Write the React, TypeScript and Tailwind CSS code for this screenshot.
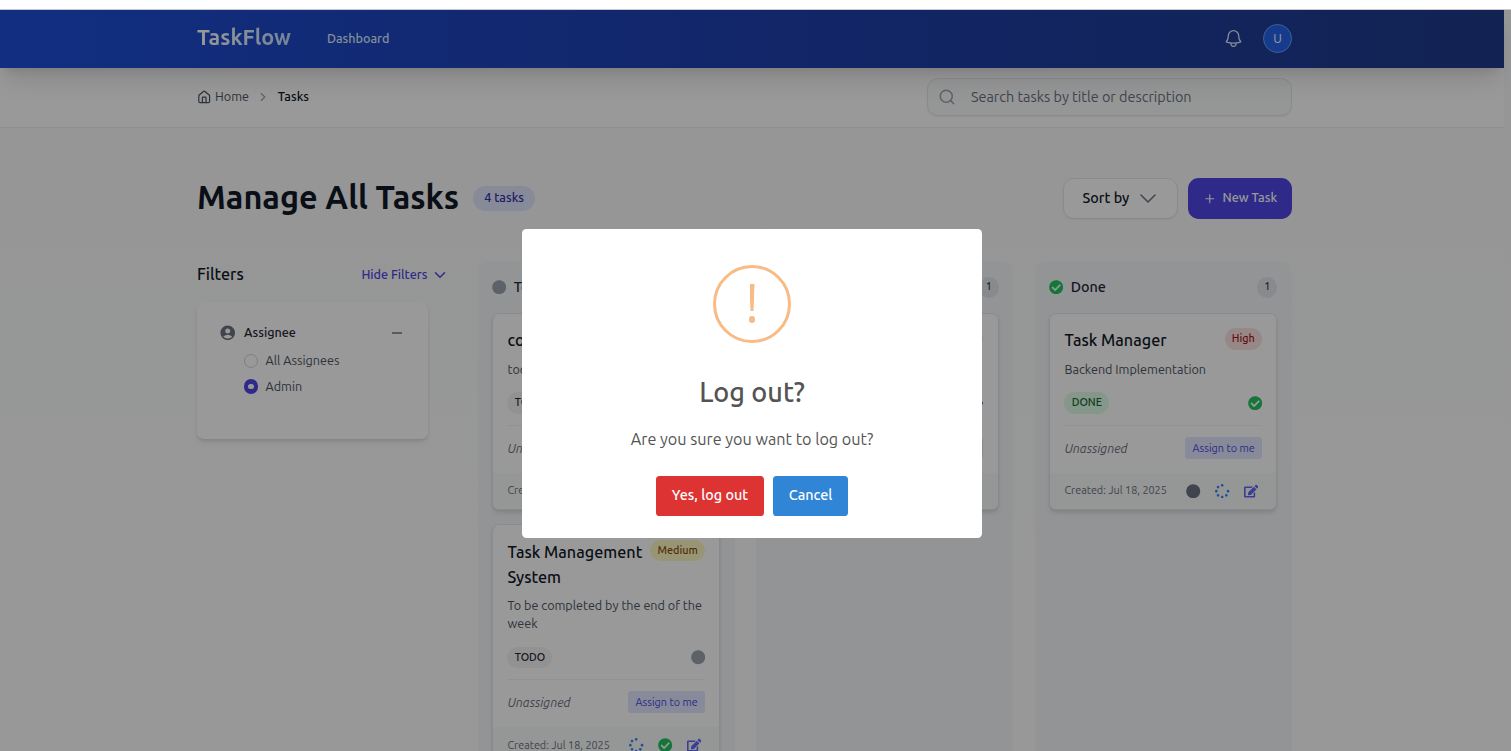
import type { ReactNode } from "react";
import { ChevronRight, House, Search } from "lucide-react";
import { FaCheckCircle, FaCircle, FaEdit, FaSpinner } from "react-icons/fa";
import { MdAccountCircle } from "react-icons/md";
import { HiOutlineBell } from "react-icons/hi2";
import { FiChevronDown, FiPlus } from "react-icons/fi";

type Status = "todo" | "progress" | "done";

function StatusIcon({ status, dark = false }: { status: Status; dark?: boolean }) {
  if (status === "done") return <FaCheckCircle className="size-[14.4px] text-[#22c55e]" />;
  if (status === "progress") return <FaSpinner className="size-[14.4px] text-[#3b82f6]" />;
  return <FaCircle className={dark ? "size-[14.4px] text-[#6b7280]" : "size-[14.4px] text-[#9ca3af]"} />;
}

const pillStyles: Record<Status, string> = {
  todo: "bg-[#f3f4f6] text-[#1f2937]",
  progress: "bg-[#dbeafe] text-[#1e40af]",
  done: "bg-[#dcfce7] text-[#166534]",
};

function Card({
  title,
  description,
  status,
  label,
  priority,
  actions,
}: {
  title: ReactNode;
  description: ReactNode;
  status: Status;
  label: string;
  priority: "High" | "Medium";
  actions: Status[];
}) {
  return (
    <article className="overflow-hidden rounded-[7px] border border-[#e5e7eb] bg-white shadow-[0_3.6px_5.4px_-1px_rgba(0,0,0,0.1),0_1.8px_3.6px_-1.8px_rgba(0,0,0,0.1)]">
      <div className="px-[14.4px] pt-[14.2px] pb-[14.2px]">
        <div className="flex min-h-[25px] items-start justify-between gap-[7px]">
          <h3 className="text-[16.2px] leading-[25px] font-medium whitespace-nowrap text-[#111827]">{title}</h3>
          <span
            className={
              priority === "High"
                ? "h-[21.6px] shrink-0 rounded-full bg-[#fee2e2] px-[7.2px] text-[10.8px] leading-[20px] font-medium text-[#991b1b]"
                : "h-[21.6px] shrink-0 rounded-full bg-[#fef9c3] px-[7.2px] text-[10.8px] leading-[20px] font-medium text-[#854d0e]"
            }
          >
            {priority}
          </span>
        </div>
        <p className="mt-[6.8px] min-h-[18px] text-[12.6px] leading-[18px] whitespace-nowrap text-[#4b5563]">
          {description}
        </p>
        <div className="mt-[14.4px] flex items-center justify-between">
          <span
            className={`h-[21.6px] rounded-full px-[7.2px] text-[10.8px] leading-[20px] font-medium ${pillStyles[status]}`}
          >
            {label}
          </span>
          <StatusIcon status={status} />
        </div>
        <div className="mt-[11px] flex items-center justify-between border-t border-[#f3f4f6] pt-[10.8px]">
          <span className="text-[12.6px] leading-[18px] text-[#6b7280] italic">Unassigned</span>
          <button className="h-[22px] rounded-[3.6px] bg-[#e0e7ff] px-[7.2px] text-[10.8px] leading-[20px] whitespace-nowrap text-[#4f46e5]">
            Assign to me
          </button>
        </div>
      </div>
      <footer className="flex h-[36px] items-center justify-between bg-[#f9fafb] pr-[18px] pl-[14.4px]">
        <span className="pb-[1px] text-[10.8px] leading-[16px] whitespace-nowrap text-[#6b7280]">
          Created: Jul 18, 2025
        </span>
        <div className="flex items-center gap-[14.4px] pt-[0.6px]">
          {actions.map((a) => (
            <StatusIcon key={a} status={a} dark />
          ))}
          <FaEdit className="size-[14.4px] text-[#6366f1]" />
        </div>
      </footer>
    </article>
  );
}

function Column({
  status,
  name,
  count,
  children,
}: {
  status: Status;
  name: string;
  count: number;
  children: ReactNode;
}) {
  return (
    <section className="flex h-[600px] w-[257px] shrink-0 flex-col rounded-[11px] bg-[#f6f7f9] px-[14.4px] pt-[15px]">
      <header className="flex h-[22px] items-center justify-between">
        <div className="flex items-center gap-[7.2px]">
          <StatusIcon status={status} />
          <h2 className="text-[14.4px] leading-[22px] font-medium text-[#1f2937]">{name}</h2>
        </div>
        <span className="h-[21px] w-5 rounded-full bg-[#e5e7eb] text-center text-[10.8px] leading-[19px] font-medium text-[#374151]">
          {count}
        </span>
      </header>
      <div className="mt-[15px] flex flex-col gap-[14.4px]">{children}</div>
    </section>
  );
}

function Header() {
  return (
    <header className="relative z-10 flex h-[58px] w-[1504px] items-center justify-between bg-linear-to-r from-[#1d4ed8] via-[#1e40af] to-[#1e3a8a] pr-[212px] pb-[2px] pl-[197px] shadow-[0_18px_22.5px_-4.5px_rgba(0,0,0,0.1),0_7px_9px_-5.4px_rgba(0,0,0,0.1)]">
      <div className="flex items-center gap-9">
        <span className="bg-linear-to-r from-white to-[#bfdbfe] bg-clip-text pb-[3px] text-[21.6px] leading-[30px] font-bold text-transparent">
          TaskFlow
        </span>
        <a className="text-[12.6px] leading-[18px] font-medium text-[#dbeafe]">Dashboard</a>
      </div>
      <div className="flex items-center gap-[19px]">
        <HiOutlineBell className="mt-px size-[21px] text-[#dbeafe]" />
        <span className="flex size-[29px] items-center justify-center rounded-full border border-[#60a5fa] bg-[#2563eb] text-[12.6px] text-white">
          U
        </span>
      </div>
    </header>
  );
}

function Breadcrumbs() {
  return (
    <div className="flex h-[60px] w-[1504px] items-center justify-between border-b border-[#f0f1f3] bg-white pr-[212px] pb-[2px] pl-[197px]">
      <nav className="flex items-center pb-px text-[12.6px] leading-[18px]">
        <House className="mt-[2px] size-[14.4px] text-[#4b5563]" strokeWidth={2} />
        <span className="ml-[3.6px] text-[#4b5563]">Home</span>
        <ChevronRight className="mr-[7.4px] ml-[7.4px] mt-px size-[14px] text-[#9ca3af]" />
        <span className="font-medium text-[#111827]">Tasks</span>
      </nav>
      <label className="flex h-[38px] w-[365px] items-center rounded-[10.8px] border border-[#e5e7eb] bg-[#f9fafb] pl-[9.8px] shadow-[0_1px_2px_rgba(0,0,0,0.06)]">
        <Search className="size-[18px] text-[#9ca3af]" />
        <span className="ml-[15.1px] text-[14.4px] leading-[20px] text-[#6b7280]">
          Search tasks by title or description
        </span>
      </label>
    </div>
  );
}

function Filters() {
  return (
    <aside className="w-[249px] shrink-0">
      <div className="flex h-[28px] items-center justify-between pb-[2px]">
        <h2 className="text-[16.2px] leading-[25px] font-medium text-[#111827]">Filters</h2>
        <button className="-mr-[3px] flex items-center text-[12.6px] leading-[18px] font-medium text-[#4f46e5]">
          Hide Filters
          <FiChevronDown className="mt-px ml-[3.6px] size-[18px]" />
        </button>
      </div>
      <div className="mt-[14px] h-[136px] w-[231px] rounded-[7px] bg-white px-[22px] pt-[20px] shadow-[0_3.6px_5.4px_-1px_rgba(0,0,0,0.1),0_1.8px_3.6px_-1.8px_rgba(0,0,0,0.1)]">
        <div className="flex h-[18px] items-center">
          <MdAccountCircle className="mt-px size-[17.5px] text-[#6b7280]" />
          <span className="ml-[7.4px] text-[12.6px] leading-[18px] font-medium text-[#1f2937]">Assignee</span>
          <span className="mt-[2px] mr-[4px] ml-auto h-[2px] w-[10px] bg-[#9298a2]" />
        </div>
        <div className="mt-[10px] ml-[25px] flex flex-col gap-[8px] text-[12.6px] leading-[18px] text-[#4b5563]">
          <div className="flex h-[18px] items-center">
            <span className="mt-[2px] size-[14.4px] rounded-full border border-[#d1d5db]" />
            <span className="ml-[7.2px]">All Assignees</span>
          </div>
          <div className="flex h-[18px] items-center">
            <span className="mt-px flex size-[14.4px] items-center justify-center rounded-full bg-[#4f46e5]">
              <span className="size-[5.5px] rounded-full bg-white" />
            </span>
            <span className="ml-[7.2px]">Admin</span>
          </div>
        </div>
      </div>
    </aside>
  );
}

function LogoutDialog() {
  return (
    <div className="absolute inset-0 z-20 bg-black/40">
      <div
        role="dialog"
        className="mt-[219px] ml-[522px] flex h-[309px] w-[460px] flex-col items-center rounded-[4.5px] bg-white pt-[36px]"
      >
        <div className="flex size-[78px] flex-col items-center rounded-full border-[3px] border-[#f8bb86] pt-[16px]">
          <span className="h-[27px] w-[5px] bg-[#f8bb86] [clip-path:polygon(0_0,100%_0,80%_100%,20%_100%)]" />
          <span className="mt-[5px] size-[6.5px] rounded-full bg-[#f8bb86]" />
        </div>
        <h2 className="mt-[29px] text-[27px] leading-[40px] font-[540] text-[#545454]">Log out?</h2>
        <p className="mt-[15px] text-[16.2px] leading-[24px] text-[#545454]">Are you sure you want to log out?</p>
        <div className="mt-[25px] flex gap-[9px] text-[14.4px] font-medium text-white">
          <button className="h-10 w-[108px] rounded-[3.6px] bg-[#dd3333] pb-px">Yes, log out</button>
          <button className="h-10 w-[75px] rounded-[3.6px] bg-[#3085d6] pb-px">Cancel</button>
        </div>
      </div>
    </div>
  );
}

export default function App() {
  return (
    <div className="h-[751px] overflow-hidden bg-white pt-[9px] font-['Ubuntu','Noto_Sans',sans-serif]">
      <div className="h-px bg-[#c8cacc]" />
      <div className="relative h-[741px] overflow-hidden bg-linear-to-b from-[#f9fafb] to-[#fefefe]">
        <Header />
        <Breadcrumbs />
        <main className="ml-[197px] w-[1095px] pt-[50px]">
          <div className="flex h-[41px] items-center justify-between">
            <div className="flex items-center">
              <h1 className="pb-[3px] text-[32.4px] leading-[40px] font-semibold text-[#111827]">Manage All Tasks</h1>
              <span className="ml-[14.4px] h-[25px] rounded-full bg-[#e0e7ff] px-[10.8px] text-[12.6px] leading-[23px] font-medium text-[#3730a3]">
                4 tasks
              </span>
            </div>
            <div className="flex gap-[10px]">
              <button className="flex h-[41px] w-[115px] items-center rounded-[10.8px] border border-[#e5e7eb] bg-white pl-[18.4px] text-[14.4px] font-medium text-[#111827] shadow-[0_1px_2px_rgba(0,0,0,0.06)]">
                Sort by
                <svg viewBox="0 0 16 9" className="ml-[10.5px] h-[9px] w-4" fill="none" stroke="#6b7280" strokeWidth="1.5">
                  <path d="M1 1l7 7 7-7" strokeLinecap="round" strokeLinejoin="round" />
                </svg>
              </button>
              <button className="flex h-[41px] w-[104px] items-center rounded-[10.8px] bg-[#4f46e5] pb-[2px] pl-[14.5px] text-[12.6px] font-medium whitespace-nowrap text-white">
                <FiPlus className="mt-[2px] mr-[6.5px] size-[13.5px]" />
                New Task
              </button>
            </div>
          </div>
          <div className="mt-[42px] flex">
            <Filters />
            <div className="ml-[31.7px] flex gap-[21.5px]">
              <Column status="todo" name="To Do" count={2}>
                <Card title="coding" description="todo" status="todo" label="TODO" priority="High" actions={["progress", "done"]} />
                <Card
                  title={
                    <>
                      Task Management
                      <br />
                      System
                    </>
                  }
                  description={
                    <>
                      To be completed by the end of the
                      <br />
                      week
                    </>
                  }
                  status="todo"
                  label="TODO"
                  priority="Medium"
                  actions={["progress", "done"]}
                />
              </Column>
              <Column status="progress" name="In Progress" count={1}>
                <Card title="" description="" status="progress" label="IN PROGRESS" priority="High" actions={["todo", "done"]} />
              </Column>
              <Column status="done" name="Done" count={1}>
                <Card
                  title="Task Manager"
                  description="Backend Implementation"
                  status="done"
                  label="DONE"
                  priority="High"
                  actions={["todo", "progress"]}
                />
              </Column>
            </div>
          </div>
        </main>
        <LogoutDialog />
      </div>
    </div>
  );
}
